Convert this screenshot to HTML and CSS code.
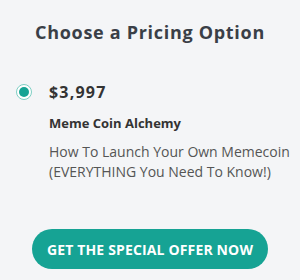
FILE: index.html
```html
<!DOCTYPE html>
<html>
<head>
<meta charset="utf-8">
<link rel="stylesheet" href="styles.css">
</head>
<body>
<div class="page">
  <h1 class="title">Choose a Pricing Option</h1>
  <div class="option">
    <span class="radio"><span class="dot"></span></span>
    <div class="details">
      <div class="price">$3,997</div>
      <div class="name">Meme Coin Alchemy</div>
      <p class="desc">How To Launch Your Own Memecoin<br>(EVERYTHING You Need To Know!)</p>
    </div>
  </div>
  <div class="cta">
    <a class="btn" href="#">GET THE SPECIAL OFFER NOW</a>
  </div>
</div>
</body>
</html>
```
FILE: styles.css
```css
html, body {
  margin: 0;
  padding: 0;
  background: #f4f5f7;
}
.page {
  width: 300px;
  height: 280px;
  font-family: "Open Sans", "Liberation Sans", sans-serif;
  color: #3a3f47;
  display: flex;
  flex-direction: column;
}
.title {
  margin: 0;
  padding-top: 20px;
  font-size: 18px;
  line-height: 24px;
  font-weight: 700;
  letter-spacing: 0.7px;
  text-align: center;
  color: #3a3f47;
}
.option {
  display: flex;
  align-items: flex-start;
  padding: 37px 0 0 16px;
  gap: 17px;
}
.radio {
  width: 16px;
  height: 16px;
  box-sizing: border-box;
  border: 1.5px solid #7fcfc4;
  border-radius: 50%;
  display: flex;
  align-items: center;
  justify-content: center;
  margin-top: 3px;
  background: #fff;
}
.dot {
  width: 10px;
  height: 10px;
  border-radius: 50%;
  background: #16a394;
}
.details {
  display: flex;
  flex-direction: column;
}
.price {
  font-size: 16px;
  line-height: 22px;
  font-weight: 700;
  letter-spacing: 1.2px;
  color: #333;
}
.name {
  margin-top: 11px;
  font-size: 13px;
  line-height: 18px;
  font-weight: 700;
  color: #333;
}
.desc {
  margin: 10px 0 0;
  font-size: 14px;
  line-height: 20px;
  color: #555;
}
.cta {
  display: flex;
  justify-content: center;
  padding-top: 47px;
}
.btn {
  width: 236px;
  height: 40px;
  border-radius: 20px;
  background: #16a394;
  color: #fff;
  font-size: 14px;
  font-weight: 700;
  letter-spacing: 0.15px;
  text-decoration: none;
  display: flex;
  align-items: center;
  justify-content: center;
}
```
